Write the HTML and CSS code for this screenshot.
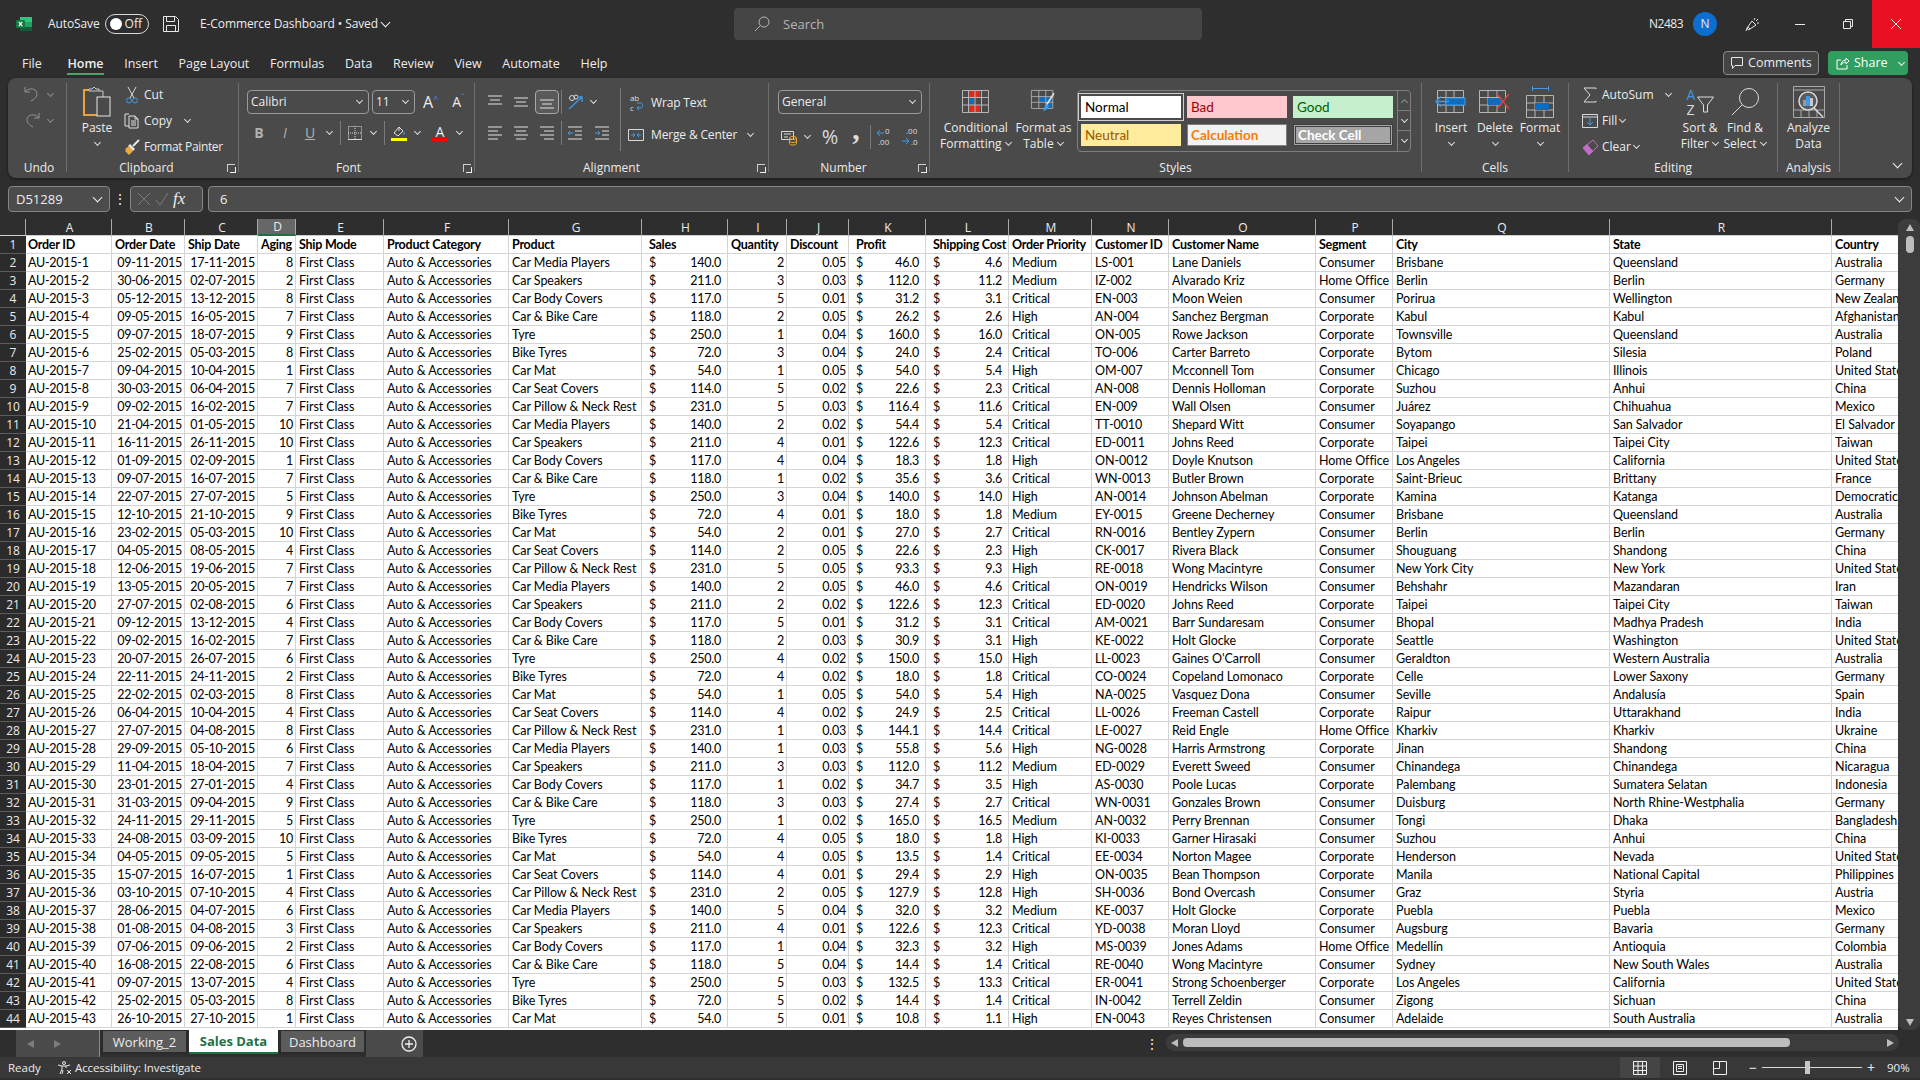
FILE: index.html
```html
<!DOCTYPE html>
<html lang="en">

<head>
    <meta charset="UTF-8">
    <title>E-Commerce Dashboard - Excel</title>
    <link rel="stylesheet" href="styles.css">
</head>

<body>
    <!-- title bar -->
    <header class="titlebar">
        <div class="title-left">
            <svg class="logo" viewBox="0 0 16 16">
                <rect x="4" y="1" width="12" height="5" fill="#33c481" />
                <rect x="4" y="6" width="12" height="5" fill="#21a366" />
                <rect x="4" y="11" width="12" height="4" fill="#185c37" />
                <rect x="0" y="4" width="9" height="8" rx="1" fill="#107c41" />
                <path d="M2.8 5.8l3.4 4.4M6.2 5.8l-3.4 4.4" stroke="#fff" stroke-width="1.2" />
            </svg>
            <span class="autosave">AutoSave</span>
            <span class="toggle"><b></b>Off</span>
            <svg class="save" viewBox="0 0 16 16" fill="none" stroke="#e8e8e8">
                <path d="M.5.5h12l3 3v12H.5zM3.5.5v5h8v-5M3.5 15.5v-6h9v6" />
            </svg>
            <span class="docname">E-Commerce Dashboard &bull; Saved</span>
            <i class="chev chev-w"></i>
        </div>
        <div class="search">
            <svg class="ic16" viewBox="0 0 16 16" fill="none" stroke="#b5b5b5">
                <circle cx="10" cy="6" r="5" />
                <path d="M6.3 9.7L1 15" />
            </svg>
            <span>Search</span>
        </div>
        <div class="title-right">
            <span class="username">N2483</span>
            <span class="avatar">N</span>
            <span class="winbtn">
                <svg class="ic16" viewBox="0 0 16 16" fill="none" stroke="#e8e8e8">
                    <path d="M8 5L3 12l1.5 2L12 9zM4 11l2 2M3 12l-1 3M11 2l-1 2M14 3l-2 2M15 7h-2" />
                </svg>
            </span>
            <span class="winbtn"><svg class="ic10" viewBox="0 0 10 10" stroke="#e8e8e8"><path d="M0 5.5h10" /></svg></span>
            <span class="winbtn"><svg class="ic10" viewBox="0 0 10 10" fill="none" stroke="#e8e8e8"><path d="M.5 2.5h7v7h-7zM2.5 2.5v-2h7v7h-2" /></svg></span>
            <span class="winbtn close"><svg class="ic12" viewBox="0 0 12 12" stroke="#fff"><path d="M1 1l10 10M11 1L1 11" /></svg></span>
        </div>
    </header>

    <!-- menu tabs -->
    <nav class="menubar">
        <a class="first">File</a>
        <a class="active">Home</a>
        <a>Insert</a>
        <a>Page Layout</a>
        <a>Formulas</a>
        <a>Data</a>
        <a>Review</a>
        <a>View</a>
        <a>Automate</a>
        <a>Help</a>
        <button class="comments">
            <svg class="ic12" viewBox="0 0 12 12" fill="none" stroke="#e8e8e8"><path d="M.5.5h11v8H4l-2.5 3v-3h-1z" /></svg>
            Comments
        </button>
        <div class="share">
            <svg class="ic14" viewBox="0 0 14 14" fill="none" stroke="#fff"><path d="M5 4H1v9h10V9M5 9c0-3 2-5 5-5V2l3 3-3 3V6C8 6 6 7 5 9z" /></svg>
            <span class="share-label">Share</span>
            <i class="chev chev-w"></i>
        </div>
    </nav>

    <!-- ribbon -->
    <div class="ribbon">
        <section class="group g-undo">
            <div class="gbody undo-body">
                <div class="undo-row">
                    <svg class="ic16" viewBox="0 0 16 16" fill="none" stroke="#949494"><path d="M1 1v5h5M1 6c3-4 9-4 11-1s1 7-5 10" /></svg>
                    <i class="chev chev-d"></i>
                </div>
                <div class="undo-row">
                    <svg class="ic16" viewBox="0 0 16 16" fill="none" stroke="#949494"><path d="M15 1v5h-5M15 6c-3-4-9-4-11-1s-1 7 5 10" /></svg>
                    <i class="chev chev-d"></i>
                </div>
            </div>
            <div class="glabel">Undo</div>
        </section>

        <section class="group g-clip">
            <div class="gbody clip-body">
                <div class="bigbtn paste">
                    <svg class="ic-paste" viewBox="0 0 28 31" fill="none">
                        <path d="M6 4H1v25h13" stroke="#e8a33a" stroke-width="2" />
                        <path d="M6 5V3h3l2-2 2 2h3v2zM16 5h4v6" stroke="#c9c9c9" />
                        <rect x="14" y="11" width="13" height="19" fill="#4a4a4a" stroke="#e6e6e6" />
                    </svg>
                    <span>Paste</span>
                    <span><i class="chev"></i></span>
                </div>
                <div class="small-list">
                    <div class="small-row">
                        <span class="slot">
                            <svg class="ic-cut" viewBox="0 0 12 17" fill="none">
                                <path d="M2 0l6 11M10 0L4 11" stroke="#d8d8d8" />
                                <circle cx="3" cy="13.5" r="2.5" stroke="#3d9ae8" />
                                <circle cx="9" cy="13.5" r="2.5" stroke="#3d9ae8" />
                            </svg>
                        </span>
                        <span>Cut</span>
                    </div>
                    <div class="small-row">
                        <span class="slot">
                            <svg class="ic16" viewBox="0 0 16 16" fill="none" stroke="#e0e0e0">
                                <path d="M5 1H1v12h4M5 3h6l3 3v9H5zM11 3v3h3M7 8h5M7 10h5M7 12h5" />
                            </svg>
                        </span>
                        <span>Copy</span>
                        <i class="chev copy-chev"></i>
                    </div>
                    <div class="small-row">
                        <span class="slot">
                            <svg class="ic16" viewBox="0 0 16 16">
                                <path d="M15 1L9 7" stroke="#e8e8e8" stroke-width="2" />
                                <path d="M6 5l5 5-2 2-5-5z" fill="#e8e8e8" />
                                <path d="M5 7l4 5-4 4-4-4 1-1-1-1z" fill="#eda83a" />
                            </svg>
                        </span>
                        <span class="painter">Format Painter</span>
                    </div>
                </div>
            </div>
            <div class="glabel">Clipboard <i class="launcher"></i></div>
        </section>

        <section class="group g-font">
            <div class="gbody">
                <div class="font-row1">
                    <div class="select font-name"><span>Calibri</span><i class="chev"></i></div>
                    <div class="select font-size"><span>11</span><i class="chev"></i></div>
                    <span class="grow-a">A<sup>^</sup></span>
                    <span class="shrink-a">A<sup>&#711;</sup></span>
                </div>
                <div class="font-row2">
                    <b class="fmt dim">B</b>
                    <em class="fmt dim">I</em>
                    <u class="fmt dim">U</u>
                    <i class="chev"></i>
                    <span class="vsep"></span>
                    <svg class="ic14" viewBox="0 0 14 14" fill="none" stroke="#d8d8d8" stroke-dasharray="1 1">
                        <path d="M.5.5h13v13H.5zM7 0v14M0 7h14" />
                        <path d="M0 13.5h14" stroke-dasharray="none" />
                    </svg>
                    <i class="chev"></i>
                    <span class="vsep"></span>
                    <svg class="ic16" viewBox="0 0 16 16" fill="none">
                        <path d="M8 2L3 8l4 3 5-5zM8 2c0 2 0 3 0 4" stroke="#e0e0e0" />
                        <path d="M13 6c1 2 1 4 0 4s-1-2 0-4z" fill="#3d9ae8" />
                        <rect y="13" width="16" height="3" fill="#ffff00" />
                    </svg>
                    <i class="chev"></i>
                    <span class="font-color">A</span>
                    <i class="chev"></i>
                </div>
            </div>
            <div class="glabel">Font <i class="launcher"></i></div>
        </section>

        <section class="group g-align">
            <div class="gbody align-body">
                <div class="align-left">
                    <div class="align-row1">
                        <svg class="ic14" viewBox="0 0 14 14" stroke="#e0e0e0"><path d="M0 1h14M2 5h10M0 9h14" /></svg>
                        <svg class="ic14" viewBox="0 0 14 14" stroke="#e0e0e0"><path d="M0 3h14M2 7h10M0 11h14" /></svg>
                        <span class="boxed">
                            <svg class="ic14" viewBox="0 0 14 14" stroke="#e0e0e0"><path d="M0 5h14M2 9h10M0 13h14" /></svg>
                        </span>
                        <span class="vsep"></span>
                        <svg class="ic16" viewBox="0 0 16 16" fill="none">
                            <circle cx="4" cy="4" r="2.5" stroke="#d8d8d8" />
                            <circle cx="8" cy="3" r="2" stroke="#d8d8d8" />
                            <path d="M1 15L14 3M9 3h5v5" stroke="#3d9ae8" stroke-width="1.3" />
                        </svg>
                        <i class="chev"></i>
                    </div>
                    <div class="align-row2">
                        <svg class="ic14" viewBox="0 0 14 14" stroke="#e0e0e0"><path d="M0 1h14M0 5h10M0 9h14M0 13h10" /></svg>
                        <svg class="ic14" viewBox="0 0 14 14" stroke="#e0e0e0"><path d="M0 1h14M2 5h10M0 9h14M2 13h10" /></svg>
                        <svg class="ic14" viewBox="0 0 14 14" stroke="#e0e0e0"><path d="M0 1h14M4 5h10M0 9h14M4 13h10" /></svg>
                        <span class="vsep"></span>
                        <svg class="ic14" viewBox="0 0 14 14" fill="none"><path d="M0 1h14M0 13h14M7 5h7M7 9h7" stroke="#e0e0e0" /><path d="M5 7H0l2-2M0 7l2 2" stroke="#3d9ae8" /></svg>
                        <svg class="ic14" viewBox="0 0 14 14" fill="none"><path d="M0 1h14M0 13h14M7 5h7M7 9h7" stroke="#e0e0e0" /><path d="M0 7h5L3 5M5 7L3 9" stroke="#3d9ae8" /></svg>
                    </div>
                </div>
                <span class="vsep tall"></span>
                <div class="align-right">
                    <div class="small-row">
                        <span class="wrap-ic">
                            <svg class="ic16" viewBox="0 0 16 16" fill="none">
                                <text x="2" y="6" class="svgtxt">ab</text>
                                <text x="2" y="16" class="svgtxt">c</text>
                                <path d="M9 8h4c2 0 2 5 0 5H9M11 11l-2 2 2 2" stroke="#3d9ae8" />
                            </svg>
                        </span>
                        <span>Wrap Text</span>
                    </div>
                    <div class="small-row">
                        <span class="wrap-ic">
                            <svg class="ic16" viewBox="0 0 16 16" fill="none">
                                <path d="M.5 2.5h15v11H.5z" stroke="#d8d8d8" />
                                <path d="M3 8h4M5 6l2 2-2 2M13 8H9M11 6L9 8l2 2" stroke="#3d9ae8" />
                            </svg>
                        </span>
                        <span>Merge &amp; Center</span>
                        <i class="chev merge-chev"></i>
                    </div>
                </div>
            </div>
            <div class="glabel">Alignment <i class="launcher"></i></div>
        </section>

        <section class="group g-number">
            <div class="gbody">
                <div class="select num-format"><span>General</span><i class="chev"></i></div>
                <div class="num-row">
                    <svg class="ic16" viewBox="0 0 16 16" fill="none">
                        <path d="M.5 2.5h12v8H.5z" stroke="#d8d8d8" />
                        <path d="M3 5h7M3 8h4" stroke="#d8d8d8" />
                        <ellipse cx="12" cy="9" rx="3.5" ry="1.5" stroke="#eda83a" />
                        <path d="M8.500 9v5.500c0 2 7 2 7 0V9M8.500 12c0 2 7 2 7 0" stroke="#eda83a" />
                    </svg>
                    <i class="chev"></i>
                    <span class="pct">%</span>
                    <span class="comma">,</span>
                    <span class="vsep"></span>
                    <svg class="ic18" viewBox="0 0 18 18" fill="none">
                        <text x="9" y="6" class="svgtxt">0</text>
                        <text x="2" y="17" class="svgtxt">.00</text>
                        <path d="M8 5H1l3-3M1 5l3 3" stroke="#3d9ae8" />
                    </svg>
                    <svg class="ic18" viewBox="0 0 18 18" fill="none">
                        <text x="5" y="6" class="svgtxt">.00</text>
                        <text x="10" y="17" class="svgtxt">.0</text>
                        <path d="M1 13h7l-3-3M8 13l-3 3" stroke="#3d9ae8" />
                    </svg>
                </div>
            </div>
            <div class="glabel">Number <i class="launcher"></i></div>
        </section>

        <section class="group g-styles">
            <div class="gbody styles-body">
                <div class="bigbtn cf">
                    <svg class="ic-grid" viewBox="0 0 27 23" fill="none">
                        <rect x="6" y="0" width="12" height="7" fill="#e0281c" />
                        <rect x="6" y="8" width="6" height="7" fill="#0f6cbd" />
                        <rect x="6" y="15" width="12" height="7" fill="#e0281c" />
                        <path d="M.5.5h26v22H.5zM6.500 0v23M13 0v23M19.500 0v23M0 7.500h27M0 15h27" stroke="#b5b5b5" />
                    </svg>
                    <span>Conditional</span>
                    <span>Formatting <i class="chev"></i></span>
                </div>
                <div class="bigbtn ft">
                    <svg class="ic-grid" viewBox="0 0 30 28" fill="none">
                        <rect x="10" y="8" width="8" height="7" fill="#0f6cbd" />
                        <rect x="18" y="8" width="8" height="7" fill="#0f6cbd" />
                        <rect x="18" y="15" width="8" height="7" fill="#0f6cbd" />
                        <path d="M.5.5h26v22H.5zM9.500 0v23M18 0v23M0 8h27M0 15h27" stroke="#b5b5b5" />
                        <path d="M28 4L19 18" stroke="#e0e0e0" stroke-width="2" />
                        <path d="M19 17l3 2c-1 4-4 6-7 7 1-4 1-7 4-9z" fill="#3d9ae8" />
                    </svg>
                    <span>Format as</span>
                    <span>Table <i class="chev"></i></span>
                </div>
                <div class="gallery">
                    <div class="style-grid">
                        <span class="style st-normal">Normal</span>
                        <span class="style st-bad">Bad</span>
                        <span class="style st-good">Good</span>
                        <span class="style st-neutral">Neutral</span>
                        <span class="style st-calc">Calculation</span>
                        <span class="style st-check">Check Cell</span>
                    </div>
                    <div class="gallery-scroll">
                        <span><i class="chev chev-up dim-chev"></i></span>
                        <span><i class="chev"></i></span>
                        <span class="more"><i class="chev"></i></span>
                    </div>
                </div>
            </div>
            <div class="glabel">Styles</div>
        </section>

        <section class="group g-cells">
            <div class="gbody cells-body">
                <div class="bigbtn">
                    <svg class="ic-grid" viewBox="0 0 32 23" fill="none">
                        <path d="M2.500.5h26v22h-26zM11 0v23M19 0v23M2 7.500h27M2 15h27" stroke="#b5b5b5" />
                        <rect x="11" y="8" width="19" height="7" fill="#0f6cbd" stroke="#3d9ae8" />
                        <path d="M14 11.500H1l5-5M1 11.500l5 5" stroke="#3d9ae8" stroke-width="1.300" />
                    </svg>
                    <span>Insert</span>
                    <span><i class="chev"></i></span>
                </div>
                <div class="bigbtn">
                    <svg class="ic-grid" viewBox="0 0 32 23" fill="none">
                        <path d="M.5.5h26v7M26.500 15v7.500H.5V.5M9 0v23M18 0v23M0 7.500h22M0 15h22" stroke="#b5b5b5" />
                        <rect x="9" y="8" width="14" height="7" fill="#0f6cbd" />
                        <path d="M18 4l12 15M30 4L18 19" stroke="#e0403a" stroke-width="1.300" />
                    </svg>
                    <span>Delete</span>
                    <span><i class="chev"></i></span>
                </div>
                <div class="bigbtn">
                    <svg class="ic-format" viewBox="0 0 28 32" fill="none">
                        <path d="M.5 2.500h16M.5 0v5M16.500 0v5" stroke="#3d9ae8" transform="translate(6 0)" />
                        <path d="M.5 9.500h27v22H.5zM9 9v23M18 9v23M0 17h28M0 24h28" stroke="#b5b5b5" />
                        <rect x="9" y="17" width="14" height="7" fill="#0f6cbd" />
                    </svg>
                    <span>Format</span>
                    <span><i class="chev"></i></span>
                </div>
            </div>
            <div class="glabel">Cells</div>
        </section>

        <section class="group g-edit">
            <div class="gbody edit-body">
                <div class="small-list edit-list">
                    <div class="small-row">
                        <span class="slot slot-edit">
                            <svg class="ic16" viewBox="0 0 16 16" fill="none" stroke="#dcdcdc"><path d="M14 2V1H2l6 7-6 7h12v-1" /></svg>
                        </span>
                        <span>AutoSum</span>
                        <i class="chev sum-chev"></i>
                    </div>
                    <div class="small-row">
                        <span class="slot slot-edit">
                            <svg class="ic16" viewBox="0 0 16 16" fill="none">
                                <path d="M.5 1.500h15v13H.5zM0 4h16" stroke="#d8d8d8" />
                                <path d="M8 5v7M5 9l3 3 3-3" stroke="#3d9ae8" />
                            </svg>
                        </span>
                        <span>Fill</span>
                        <i class="chev"></i>
                    </div>
                    <div class="small-row">
                        <span class="slot slot-edit">
                            <svg class="ic16" viewBox="0 0 16 16">
                                <path d="M11 1l5 6-9 9-6-7z" fill="none" stroke="#c06cc8" />
                                <path d="M5 5l6 7-4 4-6-7z" fill="#c06cc8" />
                            </svg>
                        </span>
                        <span>Clear</span>
                        <i class="chev"></i>
                    </div>
                </div>
                <div class="bigbtn sort">
                    <svg class="ic-sort" viewBox="0 0 28 27" fill="none">
                        <text x="0" y="12" class="svgaz blue">A</text>
                        <text x="0" y="27" class="svgaz">Z</text>
                        <path d="M11 9h16l-6 8v7h-4v-7z" stroke="#dcdcdc" />
                    </svg>
                    <span>Sort &amp;</span>
                    <span>Filter <i class="chev"></i></span>
                </div>
                <div class="bigbtn find">
                    <svg class="ic-sort" viewBox="0 0 29 27" fill="none" stroke="#dcdcdc">
                        <circle cx="18" cy="10" r="9.500" />
                        <path d="M11 17L1 27" />
                    </svg>
                    <span>Find &amp;</span>
                    <span>Select <i class="chev"></i></span>
                </div>
            </div>
            <div class="glabel">Editing</div>
        </section>

        <section class="group g-analysis">
            <div class="gbody">
                <div class="bigbtn analysis">
                    <svg class="ic-analyze" viewBox="0 0 32 32" fill="none">
                        <path d="M.5.5h31v31H.5zM0 4h32M0 24h32M8 24v8M16 24v8M24 24v8" stroke="#a8a8a8" />
                        <circle cx="15" cy="15" r="9" fill="#5a5a5a" stroke="#d8d8d8" stroke-width="1.500" />
                        <rect x="10" y="14" width="3" height="6" fill="#9a9a9a" />
                        <rect x="13" y="10" width="4" height="10" fill="#3d9ae8" />
                        <rect x="17" y="12" width="3" height="8" fill="#c8c8c8" />
                        <path d="M21 22l9 9" stroke="#d8d8d8" stroke-width="1.500" />
                    </svg>
                    <span>Analyze</span>
                    <span>Data</span>
                </div>
            </div>
            <div class="glabel">Analysis</div>
        </section>

        <i class="chev chev-w collapse"></i>
    </div>

    <!-- formula bar -->
    <div class="formulabar">
        <div class="namebox"><span>D51289</span><i class="chev chev-w"></i></div>
        <span class="fdots">&#8942;</span>
        <div class="fxbox">
            <svg class="ic14" viewBox="0 0 14 14" stroke="#7c7c7c" fill="none"><path d="M1 1l12 12M13 1L1 13" /></svg>
            <svg class="ic14" viewBox="0 0 14 14" stroke="#7c7c7c" fill="none"><path d="M1 8l4 5 8-12" /></svg>
            <em>fx</em>
        </div>
        <div class="finput"><span>6</span><i class="chev chev-w"></i></div>
    </div>

    <!-- worksheet -->
    <main class="sheet">
        <div class="grid-wrap">
            <table class="grid">
                <colgroup id="cols"></colgroup>
                <thead>
                    <tr id="col-head"></tr>
                </thead>
                <tbody id="rows"></tbody>
            </table>
        </div>
        <div class="vscroll">
            <i class="tri tri-up"></i>
            <span class="vthumb"></span>
            <i class="tri tri-down"></i>
        </div>
    </main>

    <!-- sheet tabs -->
    <div class="tabbar">
        <div class="tabnav"><i class="tri tri-left dim"></i><i class="tri tri-right dim"></i></div>
        <span class="tab">Working_2</span>
        <span class="tab current">Sales Data</span>
        <span class="tab">Dashboard</span>
        <div class="tabadd">
            <svg class="ic16" viewBox="0 0 16 16" fill="none" stroke="#f0f0f0"><circle cx="8" cy="8" r="7" stroke-width="1.300" /><path d="M8 4v8M4 8h8" stroke-width="1.300" /></svg>
        </div>
        <span class="tabdots">&#8942;</span>
        <div class="hscroll">
            <i class="tri tri-left"></i>
            <span class="hthumb"></span>
            <i class="tri tri-right"></i>
        </div>
    </div>

    <!-- status bar -->
    <footer class="statusbar">
        <span class="ready">Ready</span>
        <svg class="ic14" viewBox="0 0 14 14" fill="none" stroke="#e8e8e8">
            <circle cx="6" cy="2" r="1.500" />
            <path d="M0 4l4 1h4l4-1M4 5v3l-2 5M8 5v2M5 9l-1 4M9 9l4 4M13 9l-4 4" />
        </svg>
        <span class="access">Accessibility: Investigate</span>
        <div class="views">
            <span class="view current">
                <svg class="ic14" viewBox="0 0 14 14" fill="none" stroke="#f0f0f0"><path d="M.5.5h13v13H.5zM5 0v14M9.500 0v14M0 5h14M0 9.500h14" /></svg>
            </span>
            <span class="view">
                <svg class="ic14" viewBox="0 0 14 14" fill="none" stroke="#f0f0f0"><path d="M.5.5h13v13H.5zM3.500 3.500h7v7h-7zM5 5.500h4M5 7.500h4" /></svg>
            </span>
            <span class="view">
                <svg class="ic14" viewBox="0 0 14 14" fill="none" stroke="#f0f0f0"><path d="M.5.5h13v13H.5zM6.500 0v7.500H0" /></svg>
            </span>
        </div>
        <div class="zoom">
            <span class="zoom-sign">&minus;</span>
            <div class="slider"><b></b></div>
            <span class="zoom-sign">+</span>
            <span class="zoom-val">90%</span>
        </div>
    </footer>

    <script src="script.js"></script>
</body>

</html>
```

FILE: styles.css
```css
* {
    box-sizing: border-box;
}

html,
body {
    margin: 0;
    height: 100%;
    overflow: hidden;
}

body {
    width: 1920px;
    height: 1080px;
    background-color: #2e2e2e;
    color: #ececec;
    font-family: "Open Sans", sans-serif;
    font-size: 12px;
    line-height: 16px;
    display: flex;
    flex-direction: column;
}

svg {
    flex: none;
    display: block;
    overflow: visible;
}

.ic10 { width: 10px; height: 10px; }
.ic12 { width: 12px; height: 12px; }
.ic14 { width: 14px; height: 14px; }
.ic16 { width: 16px; height: 16px; }
.ic18 { width: 18px; height: 18px; }
.ic-grid { height: 23px; width: auto; }
.ic-paste { width: 28px; height: 31px; }
.ic-cut { width: 12px; height: 17px; }
.ic-format { width: 28px; height: 32px; }
.ic-sort { width: 29px; height: 27px; }
.ic-analyze { width: 32px; height: 32px; }

.svgtxt {
    font: 8px "Open Sans", sans-serif;
    fill: #dcdcdc;
}

.svgaz {
    font: 14px "Open Sans", sans-serif;
    fill: #dcdcdc;
}

.blue {
    fill: #3d9ae8;
}

/* little down arrow, used all over the ribbon */
.chev {
    display: inline-block;
    width: 5px;
    height: 5px;
    margin: 0 1px 3px;
    border-right: 1.2px solid #dcdcdc;
    border-bottom: 1.2px solid #dcdcdc;
    transform: rotate(45deg);
    flex: none;
}

.chev-w {
    width: 7px;
    height: 7px;
    border-right-width: 1.5px;
    border-bottom-width: 1.5px;
    border-color: #f0f0f0;
}

.chev-d {
    border-color: #8a8a8a;
}

.chev-up {
    margin: 3px 1px 0;
    transform: rotate(225deg);
}

.dim-chev {
    border-color: #8c8c8c;
}

/* title bar */
.titlebar {
    height: 48px;
    flex: none;
    display: flex;
    align-items: center;
}

.title-left {
    width: 734px;
    display: flex;
    align-items: center;
    padding-left: 16px;
}

.logo {
    width: 16px;
    height: 16px;
}

.autosave {
    width: 57px;
    margin-left: 16px;
    letter-spacing: -0.1px;
}

.toggle {
    width: 44px;
    height: 20px;
    border: 1px solid #d8d8d8;
    border-radius: 10px;
    display: flex;
    align-items: center;
    justify-content: space-between;
    padding: 0 6px 0 4px;
    font-size: 12px;
}

.toggle b {
    width: 12px;
    height: 12px;
    border-radius: 50%;
    background-color: #fff;
}

.save {
    width: 16px;
    height: 16px;
    margin-left: 14px;
}

.docname {
    margin-left: 21px;
    width: 181px;
    white-space: nowrap;
    letter-spacing: -0.1px;
}

.search {
    width: 468px;
    height: 32px;
    border-radius: 4px;
    background-color: #454545;
    display: flex;
    align-items: center;
    gap: 13px;
    padding-left: 20px;
    color: #b5b5b5;
    font-size: 13px;
}

.title-right {
    flex: 1;
    display: flex;
    align-items: center;
    justify-content: flex-end;
    height: 100%;
}

.username {
    margin-right: 10px;
    letter-spacing: -0.5px;
}

.avatar {
    width: 24px;
    height: 24px;
    border-radius: 50%;
    background-color: #0b6fd0;
    text-align: center;
    line-height: 24px;
    margin-right: 11px;
}

.winbtn {
    width: 48px;
    height: 48px;
    display: flex;
    align-items: center;
    justify-content: center;
}

.winbtn.close {
    background-color: #e81123;
}

/* menu tabs */
.menubar {
    height: 30px;
    flex: none;
    display: flex;
    align-items: center;
    gap: 20.6px;
    padding: 0 12px 0 22px;
    font-size: 12.5px;
}

.menubar a {
    position: relative;
    padding-top: 2px;
    line-height: 30px;
}

.menubar a.first {
    margin-right: 5px;
}

.menubar a.active {
    font-weight: 600;
}

.menubar a.active::after {
    content: "";
    position: absolute;
    left: 0;
    right: 0;
    bottom: 4px;
    height: 2px;
    background-color: #4ea36c;
}

.comments {
    margin-left: auto;
    margin-right: -12px;
    width: 96px;
    height: 24px;
    border: 1px solid #8a8a8a;
    border-radius: 4px;
    background-color: #444;
    color: inherit;
    font: inherit;
    display: flex;
    align-items: center;
    justify-content: center;
    gap: 5px;
    padding: 0;
}

.share {
    width: 80px;
    height: 24px;
    border-radius: 4px;
    background-color: #2f9e5e;
    display: flex;
    align-items: center;
    gap: 4px;
    padding-left: 8px;
    color: #fff;
}

.share .chev {
    width: 5px;
    height: 5px;
    margin-left: 7px;
    margin-bottom: 2px;
}

/* ribbon */
.ribbon {
    height: 100px;
    flex: none;
    margin: 0 8px;
    padding-top: 5px;
    border-radius: 8px;
    background-color: #4a4a4a;
    box-shadow: 0 1px 3px rgba(0, 0, 0, 0.5);
    display: flex;
}

.group {
    height: 89px;
    flex: none;
    border-right: 1px solid #6e6e6e;
}

.g-undo { width: 59px; }
.g-clip { width: 172px; }
.g-font { width: 236px; }
.g-align { width: 294px; }
.g-number { width: 161px; }
.g-styles { width: 492px; }
.g-cells { width: 147px; }
.g-edit { width: 209px; }
.g-analysis { width: 62px; }

.gbody {
    height: 78px;
    display: flow-root;
}

.glabel {
    position: relative;
    height: 14px;
    line-height: 14px;
    text-align: center;
    white-space: nowrap;
}

.g-undo .glabel { padding-left: 4px; }
.g-clip .glabel { padding-right: 12px; }
.g-font .glabel { padding-right: 16px; }
.g-align .glabel { padding-right: 20px; }
.g-number .glabel { padding-right: 11px; }

.launcher {
    position: absolute;
    right: 3px;
    top: 3px;
    width: 8px;
    height: 8px;
    border-left: 1px solid #cfcfcf;
    border-top: 1px solid #cfcfcf;
}

.launcher::after {
    content: "";
    position: absolute;
    right: -1px;
    bottom: -1px;
    width: 5px;
    height: 5px;
    border-right: 1px solid #f0f0f0;
    border-bottom: 1px solid #f0f0f0;
}

.collapse {
    align-self: flex-end;
    margin: 0 0 11px 54px;
}

.vsep {
    display: block;
    width: 1px;
    height: 24px;
    background-color: #7a7a7a;
}

.vsep.tall {
    height: 63px;
    flex: none;
    margin: 5px 0 0 3px;
}

.dim {
    color: #b0b0b0;
}

/* big ribbon button: icon, then two text lines */
.bigbtn {
    display: grid;
    grid-template-rows: 37px 16px 16px;
    justify-items: center;
    align-items: center;
    white-space: nowrap;
    flex: none;
}

.small-list {
    margin-top: -1px;
    flex: none;
}

.small-row {
    height: 26px;
    display: flex;
    align-items: center;
    white-space: nowrap;
}

.slot {
    width: 20px;
    display: flex;
    justify-content: center;
    padding-right: 4px;
}

.painter {
    letter-spacing: -0.35px;
}

.select {
    height: 24px;
    border: 1px solid #9a9a9a;
    border-radius: 4px;
    display: flex;
    align-items: center;
    justify-content: space-between;
    padding: 0 5px 0 3px;
}

/* undo */
.undo-body {
    padding: 3px 0 0 16px;
}

.undo-row {
    height: 26px;
    display: flex;
    align-items: flex-start;
    gap: 7px;
}

.undo-row .chev {
    margin-top: 5px;
}

/* clipboard */
.clip-body {
    display: flex;
    padding-left: 8px;
}

.paste {
    width: 44px;
    margin-right: 5px;
}

.copy-chev {
    margin-left: 13px;
}

/* font */
.font-row1 {
    display: flex;
    align-items: center;
    padding: 7px 0 0 8px;
}

.font-name { width: 122px; }

.font-size {
    width: 43px;
    margin-left: 3px;
}

.grow-a,
.shrink-a {
    font-size: 16px;
    position: relative;
}

.grow-a { margin-left: 8px; }
.shrink-a { margin-left: 14px; font-size: 14px; }

.grow-a sup,
.shrink-a sup {
    font-size: 9px;
    color: #3d9ae8;
    line-height: 0;
}

.font-row2 {
    display: grid;
    grid-template-columns: 24px 28px 22px 16px 6px 24px 12px 10px 20px 16px 30px 8px;
    align-items: center;
    justify-items: center;
    height: 24px;
    margin: 7px 0 0 8px;
}

.fmt {
    font-size: 14px;
}

.font-color {
    width: 16px;
    text-align: center;
    font-size: 14px;
    line-height: 13px;
    border-bottom: 3px solid #f00;
}

/* alignment */
.align-body {
    display: flex;
    padding-left: 8px;
}

.align-left {
    width: 134px;
    flex: none;
}

.align-row1,
.align-row2 {
    display: grid;
    align-items: center;
    justify-items: center;
    height: 24px;
}

.align-row1 {
    grid-template-columns: 24px 28px 24px 4px 26px 8px;
    margin-top: 7px;
}

.align-row2 {
    grid-template-columns: 24px 28px 24px 4px 24px 30px;
    margin-top: 7px;
}

.boxed {
    width: 24px;
    height: 24px;
    border: 1px solid #a8a8a8;
    border-radius: 4px;
    background-color: #5a5a5a;
    display: flex;
    align-items: center;
    justify-content: center;
}

.align-right {
    margin: 7px 0 0 7px;
    display: flex;
    flex-direction: column;
    gap: 6px;
    letter-spacing: -0.15px;
}

.wrap-ic {
    width: 23px;
}

.merge-chev {
    margin-left: 11px;
}

/* number */
.num-format {
    width: 144px;
    margin: 7px 0 0 9px;
}

.num-row {
    display: grid;
    grid-template-columns: 22px 14px 32px 20px 8px 22px 28px;
    align-items: center;
    justify-items: center;
    height: 24px;
    margin: 7px 0 0 9px;
}

.pct {
    font-size: 20px;
    color: #dcdcdc;
}

.comma {
    font-family: "Liberation Serif", serif;
    font-size: 30px;
    font-weight: 700;
    line-height: 16px;
    padding-bottom: 16px;
    color: #dcdcdc;
}

/* styles */
.styles-body {
    display: flex;
    padding-left: 10px;
}

.cf { width: 70px; }
.ft { width: 67px; }

.gallery {
    width: 334px;
    height: 62px;
    margin-top: 7px;
    border: 1px solid #7e7e7e;
    border-radius: 4px;
    display: flex;
}

.style-grid {
    width: 320px;
    padding: 5px 0 0 3px;
    display: grid;
    grid-template-columns: repeat(3, 100px);
    grid-auto-rows: 22px;
    gap: 6px;
}

.style {
    font-family: Lato, sans-serif;
    font-size: 13.5px;
    line-height: 22px;
    padding-left: 4px;
    white-space: nowrap;
}

.st-normal {
    background-color: #fff;
    color: #000;
    outline: 1px solid #cfcfcf;
    outline-offset: 2px;
}

.st-bad { background-color: #ffc7ce; color: #9c0006; }
.st-good { background-color: #c6efce; color: #006100; }
.st-neutral { background-color: #ffeb9c; color: #9c5700; }

.st-calc {
    background-color: #f2f2f2;
    color: #fa7d00;
    font-weight: 700;
    line-height: 20px;
    border: 1px solid #7f7f7f;
    padding-left: 3px;
}

.st-check {
    background-color: #a5a5a5;
    color: #fff;
    font-weight: 700;
    line-height: 16px;
    border: 3px double #3f3f3f;
    padding-left: 2px;
}

.gallery-scroll {
    width: 13px;
    border-left: 1px solid #7e7e7e;
    display: flex;
    flex-direction: column;
}

.gallery-scroll span {
    height: 20px;
    display: flex;
    align-items: center;
    justify-content: center;
    border-bottom: 1px solid #7e7e7e;
}

.gallery-scroll .more {
    border-bottom: none;
    flex: 1;
}

/* cells */
.cells-body {
    display: grid;
    grid-template-columns: 44px 44px 46px;
    padding-left: 7px;
}

/* editing */
.edit-body {
    display: flex;
    padding-left: 12px;
}

.edit-list {
    width: 96px;
}

.edit-list .chev {
    margin-left: 3px;
}

.slot-edit {
    width: 21px;
    padding: 0 3px 0 0;
}

.edit-list .sum-chev {
    margin-left: 12px;
}

.sort { width: 46px; }
.find { width: 44px; }

/* formula bar */
.formulabar {
    height: 26px;
    flex: none;
    margin: 8px 8px 0;
    display: flex;
    align-items: stretch;
}

.namebox,
.fxbox,
.finput {
    border: 1px solid #858585;
    border-radius: 4px;
    background-color: #4c4c4c;
    display: flex;
    align-items: center;
}

.namebox {
    width: 102px;
    justify-content: space-between;
    padding: 0 7px;
    font-size: 13px;
}

.fdots {
    width: 20px;
    text-align: center;
    line-height: 26px;
    font-size: 14px;
}

.fxbox {
    width: 73px;
    gap: 4px;
    padding-left: 6px;
}

.fxbox em {
    font-family: "Liberation Serif", serif;
    font-size: 17px;
}

.finput {
    flex: 1;
    margin-left: 5px;
    justify-content: space-between;
    padding: 0 7px 0 11px;
    font-size: 13px;
}

/* worksheet */
.sheet {
    height: 811px;
    flex: none;
    margin-top: 7px;
    display: flex;
}

.grid-wrap {
    width: 1898px;
    overflow: hidden;
    background-color: #fff;
}

.grid {
    width: 2032px;
    table-layout: fixed;
    border-collapse: separate;
    border-spacing: 0;
    font-family: Lato, sans-serif;
    font-size: 12.5px;
    letter-spacing: -0.06px;
    color: #000;
}

.grid col:nth-child(1) { width: 26px; }
.grid col:nth-child(2) { width: 86px; }
.grid col:nth-child(3) { width: 73px; }
.grid col:nth-child(4) { width: 73px; }
.grid col:nth-child(5) { width: 38px; }
.grid col:nth-child(6) { width: 88px; }
.grid col:nth-child(7) { width: 125px; }
.grid col:nth-child(8) { width: 133px; }
.grid col:nth-child(9) { width: 86px; }
.grid col:nth-child(10) { width: 59px; }
.grid col:nth-child(11) { width: 62px; }
.grid col:nth-child(12) { width: 77px; }
.grid col:nth-child(13) { width: 83px; }
.grid col:nth-child(14) { width: 83px; }
.grid col:nth-child(15) { width: 77px; }
.grid col:nth-child(16) { width: 147px; }
.grid col:nth-child(17) { width: 77px; }
.grid col:nth-child(18) { width: 217px; }
.grid col:nth-child(19) { width: 222px; }
.grid col:nth-child(20) { width: 200px; }

.grid thead th {
    height: 17px;
    padding: 0 0 0 2px;
    background-color: #2e2e2e;
    color: #ececec;
    font-family: "Open Sans", sans-serif;
    font-weight: 400;
    font-size: 12px;
    letter-spacing: 0;
    line-height: 15px;
    border-right: 1px solid #a8a8a8;
    border-bottom: 1px solid #cfcfcf;
}

.grid thead th.selected {
    background-color: #676767;
    border-bottom: 2px solid #1e7145;
}

.grid tbody th {
    height: 18px;
    padding: 0;
    background-color: #2b2b2b;
    color: #ececec;
    font-family: "Open Sans", sans-serif;
    font-weight: 400;
    font-size: 12px;
    letter-spacing: 0;
    line-height: 15px;
    border-bottom: 1px solid #5c5c5c;
}

.grid td {
    height: 18px;
    padding: 0 2px 0 3px;
    line-height: 15px;
    white-space: nowrap;
    overflow: hidden;
    border-right: 1px solid #d4d4d4;
    border-bottom: 1px solid #d4d4d4;
}

.grid td.id {
    padding-left: 2px;
    letter-spacing: -0.25px;
}

.grid td.num {
    text-align: right;
    letter-spacing: -0.25px;
}

.grid td.acc {
    text-align: right;
    padding: 0 6px 0 7px;
    letter-spacing: -0.25px;
}

.grid td.acc-head {
    padding-left: 7px;
}

.grid .cur {
    float: left;
}

.grid tr.head-row td {
    font-weight: 700;
    letter-spacing: -0.25px;
}

/* vertical scrollbar */
.vscroll {
    width: 22px;
    flex: none;
    background-color: #3c3c3c;
    border-radius: 8px;
    display: flex;
    flex-direction: column;
    align-items: center;
    padding: 5px 0 4px 2px;
}

.vthumb {
    width: 8px;
    height: 17px;
    margin-top: 5px;
    border-radius: 4px;
    background-color: #bdbdbd;
}

.tri {
    display: block;
    width: 0;
    height: 0;
    flex: none;
}

.tri-up {
    border: 4px solid transparent;
    border-top: none;
    border-bottom: 7px solid #bdbdbd;
}

.tri-down {
    margin-top: auto;
    border: 4px solid transparent;
    border-bottom: none;
    border-top: 7px solid #bdbdbd;
}

.tri-left {
    border: 4px solid transparent;
    border-left: none;
    border-right: 7px solid #bdbdbd;
}

.tri-right {
    border: 4px solid transparent;
    border-right: none;
    border-left: 7px solid #bdbdbd;
}

.tri.dim {
    border-left-color: #7c7c7c;
    border-right-color: #7c7c7c;
    border-top-color: transparent;
    border-bottom-color: transparent;
}

/* sheet tabs */
.tabbar {
    height: 27px;
    flex: none;
    display: flex;
    align-items: stretch;
    padding-left: 16px;
    font-size: 13px;
}

.tabnav {
    width: 84px;
    background-color: #4b4b4b;
    border-right: 1px solid #8a8a8a;
    display: flex;
    align-items: center;
    gap: 20px;
    padding-left: 11px;
}

.tab {
    height: 24px;
    line-height: 22px;
    margin-left: 1px;
    width: 87px;
    text-align: center;
    background-color: #5c5c5c;
    border: 2px solid #2b2b2b;
    border-top-width: 1px;
    white-space: nowrap;
}

.tab.current {
    width: 89px;
    margin-left: 1px;
    background-color: #fff;
    color: #1e7145;
    font-weight: 700;
    border: none;
    border-bottom: 2px solid #1e7145;
}

.tabadd {
    width: 57px;
    background-color: #4b4b4b;
    display: flex;
    align-items: center;
    justify-content: center;
    padding-left: 28px;
}

.tabdots {
    width: 20px;
    margin-left: 719px;
    text-align: center;
    line-height: 27px;
    font-size: 14px;
}

.hscroll {
    width: 733px;
    height: 17px;
    margin: 4px 0 0 4px;
    border-radius: 9px;
    background-color: #3c3c3c;
    display: flex;
    align-items: center;
    padding: 0 5px 0 5px;
}

.hthumb {
    width: 607px;
    height: 9px;
    margin-left: 5px;
    border-radius: 4px;
    background-color: #bdbdbd;
}

.hscroll .tri-right {
    margin-left: auto;
}

/* status bar */
.statusbar {
    height: 21px;
    flex: none;
    background-color: #383838;
    display: flex;
    align-items: center;
    padding-left: 8px;
    font-size: 11.5px;
}

.ready {
    width: 50px;
}

.access {
    margin-left: 3px;
    letter-spacing: -0.1px;
}

.views {
    margin-left: auto;
    height: 100%;
    display: flex;
}

.view {
    width: 40px;
    display: flex;
    align-items: center;
    justify-content: center;
}

.view.current {
    background-color: #454545;
}

.zoom {
    display: flex;
    align-items: center;
    width: 180px;
    padding-left: 9px;
}

.zoom-sign {
    width: 8px;
    text-align: center;
    font-size: 14px;
}

.slider {
    position: relative;
    width: 100px;
    height: 1px;
    margin: 0 5px;
    background-color: #d8d8d8;
}

.slider b {
    position: absolute;
    left: 43px;
    top: -6px;
    width: 5px;
    height: 13px;
    background-color: #c8c8c8;
}

.zoom-val {
    margin-left: 12px;
    white-space: nowrap;
}
```

FILE: script.js
```js
// column letters and header row
const letters = "ABCDEFGHIJKLMNOPQRS".split("");
const headers = ["Order ID", "Order Date", "Ship Date", "Aging", "Ship Mode", "Product Category", "Product", "Sales", "Quantity", "Discount", "Profit", "Shipping Cost", "Order Priority", "Customer ID", "Customer Name", "Segment", "City", "State", "Country"];

// order date|ship date|aging|product|sales|qty|discount|profit|shipping|priority|customer id|name|segment|city|state|country
const orders = [
    "09-11-2015|17-11-2015|8|Car Media Players|140.0|2|0.05|46.0|4.6|Medium|LS-001|Lane Daniels|Consumer|Brisbane|Queensland|Australia",
    "30-06-2015|02-07-2015|2|Car Speakers|211.0|3|0.03|112.0|11.2|Medium|IZ-002|Alvarado Kriz|Home Office|Berlin|Berlin|Germany",
    "05-12-2015|13-12-2015|8|Car Body Covers|117.0|5|0.01|31.2|3.1|Critical|EN-003|Moon Weien|Consumer|Porirua|Wellington|New Zealand",
    "09-05-2015|16-05-2015|7|Car & Bike Care|118.0|2|0.05|26.2|2.6|High|AN-004|Sanchez Bergman|Corporate|Kabul|Kabul|Afghanistan",
    "09-07-2015|18-07-2015|9|Tyre|250.0|1|0.04|160.0|16.0|Critical|ON-005|Rowe Jackson|Corporate|Townsville|Queensland|Australia",
    "25-02-2015|05-03-2015|8|Bike Tyres|72.0|3|0.04|24.0|2.4|Critical|TO-006|Carter Barreto|Corporate|Bytom|Silesia|Poland",
    "09-04-2015|10-04-2015|1|Car Mat|54.0|1|0.05|54.0|5.4|High|OM-007|Mcconnell Tom|Consumer|Chicago|Illinois|United States",
    "30-03-2015|06-04-2015|7|Car Seat Covers|114.0|5|0.02|22.6|2.3|Critical|AN-008|Dennis Holloman|Corporate|Suzhou|Anhui|China",
    "09-02-2015|16-02-2015|7|Car Pillow & Neck Rest|231.0|5|0.03|116.4|11.6|Critical|EN-009|Wall Olsen|Consumer|Juárez|Chihuahua|Mexico",
    "21-04-2015|01-05-2015|10|Car Media Players|140.0|2|0.02|54.4|5.4|Critical|TT-0010|Shepard Witt|Consumer|Soyapango|San Salvador|El Salvador",
    "16-11-2015|26-11-2015|10|Car Speakers|211.0|4|0.01|122.6|12.3|Critical|ED-0011|Johns Reed|Corporate|Taipei|Taipei City|Taiwan",
    "01-09-2015|02-09-2015|1|Car Body Covers|117.0|4|0.04|18.3|1.8|High|ON-0012|Doyle Knutson|Home Office|Los Angeles|California|United States",
    "09-07-2015|16-07-2015|7|Car & Bike Care|118.0|1|0.02|35.6|3.6|Critical|WN-0013|Butler Brown|Corporate|Saint-Brieuc|Brittany|France",
    "22-07-2015|27-07-2015|5|Tyre|250.0|3|0.04|140.0|14.0|High|AN-0014|Johnson Abelman|Corporate|Kamina|Katanga|Democratic Republic of the Congo",
    "12-10-2015|21-10-2015|9|Bike Tyres|72.0|4|0.01|18.0|1.8|Medium|EY-0015|Greene Decherney|Consumer|Brisbane|Queensland|Australia",
    "23-02-2015|05-03-2015|10|Car Mat|54.0|2|0.01|27.0|2.7|Critical|RN-0016|Bentley Zypern|Consumer|Berlin|Berlin|Germany",
    "04-05-2015|08-05-2015|4|Car Seat Covers|114.0|2|0.05|22.6|2.3|High|CK-0017|Rivera Black|Consumer|Shouguang|Shandong|China",
    "12-06-2015|19-06-2015|7|Car Pillow & Neck Rest|231.0|5|0.05|93.3|9.3|High|RE-0018|Wong Macintyre|Consumer|New York City|New York|United States",
    "13-05-2015|20-05-2015|7|Car Media Players|140.0|2|0.05|46.0|4.6|Critical|ON-0019|Hendricks Wilson|Consumer|Behshahr|Mazandaran|Iran",
    "27-07-2015|02-08-2015|6|Car Speakers|211.0|2|0.02|122.6|12.3|Critical|ED-0020|Johns Reed|Corporate|Taipei|Taipei City|Taiwan",
    "09-12-2015|13-12-2015|4|Car Body Covers|117.0|5|0.01|31.2|3.1|Critical|AM-0021|Barr Sundaresam|Consumer|Bhopal|Madhya Pradesh|India",
    "09-02-2015|16-02-2015|7|Car & Bike Care|118.0|2|0.03|30.9|3.1|High|KE-0022|Holt Glocke|Corporate|Seattle|Washington|United States",
    "20-07-2015|26-07-2015|6|Tyre|250.0|4|0.02|150.0|15.0|High|LL-0023|Gaines O'Carroll|Consumer|Geraldton|Western Australia|Australia",
    "22-11-2015|24-11-2015|2|Bike Tyres|72.0|4|0.02|18.0|1.8|Critical|CO-0024|Copeland Lomonaco|Corporate|Celle|Lower Saxony|Germany",
    "22-02-2015|02-03-2015|8|Car Mat|54.0|1|0.05|54.0|5.4|High|NA-0025|Vasquez Dona|Consumer|Seville|Andalusía|Spain",
    "06-04-2015|10-04-2015|4|Car Seat Covers|114.0|4|0.02|24.9|2.5|Critical|LL-0026|Freeman Castell|Corporate|Raipur|Uttarakhand|India",
    "27-07-2015|04-08-2015|8|Car Pillow & Neck Rest|231.0|1|0.03|144.1|14.4|Critical|LE-0027|Reid Engle|Home Office|Kharkiv|Kharkiv|Ukraine",
    "29-09-2015|05-10-2015|6|Car Media Players|140.0|1|0.03|55.8|5.6|High|NG-0028|Harris Armstrong|Corporate|Jinan|Shandong|China",
    "11-04-2015|18-04-2015|7|Car Speakers|211.0|3|0.03|112.0|11.2|Medium|ED-0029|Everett Sweed|Consumer|Chinandega|Chinandega|Nicaragua",
    "23-01-2015|27-01-2015|4|Car Body Covers|117.0|1|0.02|34.7|3.5|High|AS-0030|Poole Lucas|Corporate|Palembang|Sumatera Selatan|Indonesia",
    "31-03-2015|09-04-2015|9|Car & Bike Care|118.0|3|0.03|27.4|2.7|Critical|WN-0031|Gonzales Brown|Consumer|Duisburg|North Rhine-Westphalia|Germany",
    "24-11-2015|29-11-2015|5|Tyre|250.0|1|0.02|165.0|16.5|Medium|AN-0032|Perry Brennan|Consumer|Tongi|Dhaka|Bangladesh",
    "24-08-2015|03-09-2015|10|Bike Tyres|72.0|4|0.05|18.0|1.8|High|KI-0033|Garner Hirasaki|Consumer|Suzhou|Anhui|China",
    "04-05-2015|09-05-2015|5|Car Mat|54.0|4|0.05|13.5|1.4|Critical|EE-0034|Norton Magee|Corporate|Henderson|Nevada|United States",
    "15-07-2015|16-07-2015|1|Car Seat Covers|114.0|4|0.01|29.4|2.9|High|ON-0035|Bean Thompson|Corporate|Manila|National Capital|Philippines",
    "03-10-2015|07-10-2015|4|Car Pillow & Neck Rest|231.0|2|0.05|127.9|12.8|High|SH-0036|Bond Overcash|Consumer|Graz|Styria|Austria",
    "28-06-2015|04-07-2015|6|Car Media Players|140.0|5|0.04|32.0|3.2|Medium|KE-0037|Holt Glocke|Corporate|Puebla|Puebla|Mexico",
    "01-08-2015|04-08-2015|3|Car Speakers|211.0|4|0.01|122.6|12.3|Critical|YD-0038|Moran Lloyd|Consumer|Augsburg|Bavaria|Germany",
    "07-06-2015|09-06-2015|2|Car Body Covers|117.0|1|0.04|32.3|3.2|High|MS-0039|Jones Adams|Home Office|Medellín|Antioquia|Colombia",
    "16-08-2015|22-08-2015|6|Car & Bike Care|118.0|5|0.04|14.4|1.4|Critical|RE-0040|Wong Macintyre|Consumer|Sydney|New South Wales|Australia",
    "09-07-2015|13-07-2015|4|Tyre|250.0|5|0.03|132.5|13.3|Critical|ER-0041|Strong Schoenberger|Corporate|Los Angeles|California|United States",
    "25-02-2015|05-03-2015|8|Bike Tyres|72.0|5|0.02|14.4|1.4|Critical|IN-0042|Terrell Zeldin|Consumer|Zigong|Sichuan|China",
    "26-10-2015|27-10-2015|1|Car Mat|54.0|5|0.01|10.8|1.1|High|EN-0043|Reyes Christensen|Consumer|Adelaide|South Australia|Australia"
];

const NUM_COLS = [1, 2, 3, 8, 9];     // right aligned
const ACC_COLS = [7, 10, 11];         // accounting format, $ at the left edge

function addCell(row, tag, text, cls) {
    const cell = document.createElement(tag);
    cell.textContent = text;
    if (cls) cell.className = cls;
    row.appendChild(cell);
    return cell;
}

const cols = document.getElementById("cols");
for (let i = 0; i < 20; i++) cols.appendChild(document.createElement("col"));

const colHead = document.getElementById("col-head");
addCell(colHead, "th", "");
letters.forEach(l => addCell(colHead, "th", l, l === "D" ? "selected" : ""));

const rows = document.getElementById("rows");

const head = document.createElement("tr");
head.className = "head-row";
addCell(head, "th", "1");
headers.forEach((h, i) => addCell(head, "td", h, i === 0 ? "id" : ACC_COLS.includes(i) ? "acc-head" : ""));
rows.appendChild(head);

orders.forEach((line, idx) => {
    const f = line.split("|");
    const values = ["AU-2015-" + (idx + 1), f[0], f[1], f[2], "First Class", "Auto & Accessories"].concat(f.slice(3));
    const tr = document.createElement("tr");
    addCell(tr, "th", String(idx + 2));
    values.forEach((v, i) => {
        if (ACC_COLS.includes(i)) {
            const td = addCell(tr, "td", "", "acc");
            addCell(td, "span", "$", "cur");
            td.appendChild(document.createTextNode(v));
        } else {
            addCell(tr, "td", v, i === 0 ? "id" : NUM_COLS.includes(i) ? "num" : "");
        }
    });
    rows.appendChild(tr);
});
```
